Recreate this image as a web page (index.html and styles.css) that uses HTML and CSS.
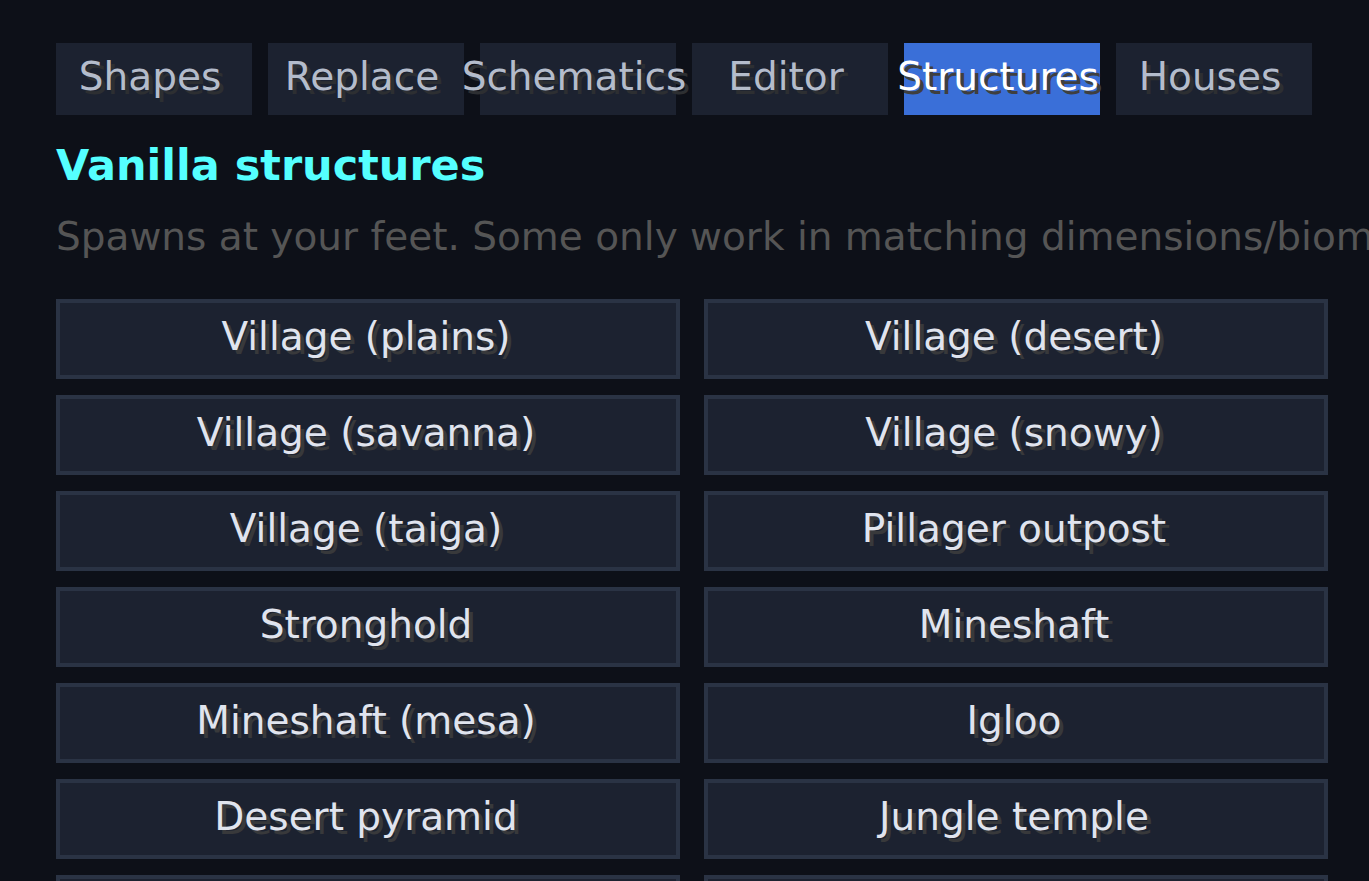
FILE: index.html
```html
<!DOCTYPE html>
<html lang="en">
<head>
    <meta charset="UTF-8">
    <title>Structures</title>
    <link rel="stylesheet" href="styles.css">
</head>
<body>
<div class="panel">
    <nav class="tabs">
        <button type="button">Shapes</button>
        <button type="button">Replace</button>
        <button type="button">Schematics</button>
        <button type="button">Editor</button>
        <button type="button" class="current">Structures</button>
        <button type="button">Houses</button>
    </nav>
    <h1>Vanilla structures</h1>
    <p class="hint">Spawns at your feet. Some only work in matching dimensions/biomes.</p>
    <div class="list">
        <button type="button">Village (plains)</button>
        <button type="button">Village (desert)</button>
        <button type="button">Village (savanna)</button>
        <button type="button">Village (snowy)</button>
        <button type="button">Village (taiga)</button>
        <button type="button">Pillager outpost</button>
        <button type="button">Stronghold</button>
        <button type="button">Mineshaft</button>
        <button type="button">Mineshaft (mesa)</button>
        <button type="button">Igloo</button>
        <button type="button">Desert pyramid</button>
        <button type="button">Jungle temple</button>
        <button type="button">Ocean monument</button>
        <button type="button">Woodland mansion</button>
    </div>
</div>
</body>
</html>
```

FILE: styles.css
```css
* {
    box-sizing: border-box;
    padding: 0;
    margin: 0;
}

body {
    background: #0d1018;
    font-family: "DejaVu Sans", sans-serif;
    font-size: 39px;
    line-height: 48px;
}

.panel {
    height: 100vh;
    padding: 43px 41px 0 56px;
    overflow: hidden;
}

/* room for the text shadow on the right and bottom */
button {
    display: flex;
    align-items: center;
    justify-content: center;
    padding: 0 4px 4px 0;
    border: 0;
    background: #1c2230;
    font: inherit;
    white-space: nowrap;
    cursor: pointer;
}

/* tabs */
.tabs {
    display: grid;
    grid-template-columns: repeat(6, minmax(0, 1fr));
    gap: 16px;
    margin-right: 16px;
}

.tabs button {
    height: 72px;
    padding-right: 8px;
    color: #b4bccb;
    text-shadow: 4px 4px 0 #2d2f32;
}

.tabs .current {
    background: #3a6fd8;
    color: #fff;
    text-shadow: 4px 4px 0 #3f3f3f;
}

h1 {
    margin-top: 26px;
    color: #55ffff;
    font-size: 43px;
    line-height: 48px;
}

.hint {
    margin-top: 24px;
    color: #555;
    white-space: nowrap;
}

/* structure buttons */
.list {
    display: grid;
    grid-template-columns: repeat(2, minmax(0, 1fr));
    gap: 16px 24px;
    margin-top: 38px;
}

.list button {
    height: 80px;
    border: 4px solid #2a3344;
    color: #e0e4ee;
    text-shadow: 4px 4px 0 #38393b;
}
```
